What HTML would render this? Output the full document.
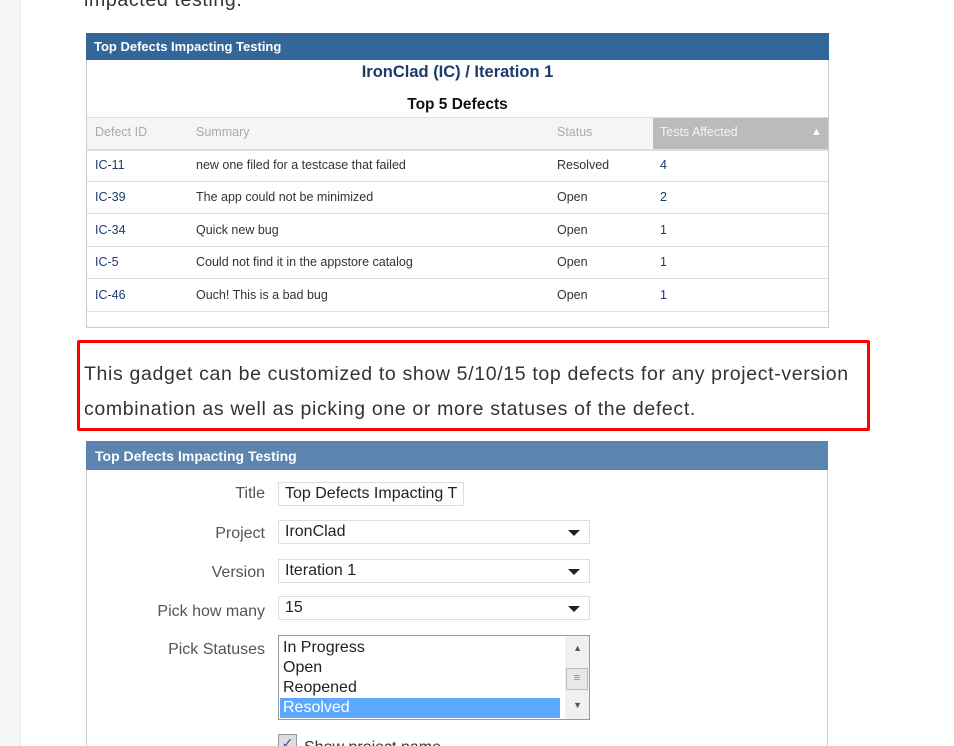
<!DOCTYPE html>
<html style="width:954px;height:746px;overflow:hidden"><head><style>
html,body{margin:0;width:954px;height:746px;overflow:hidden}
body{background:#fff;font-family:"Liberation Sans",sans-serif;position:relative}
.a{position:absolute}
.side{left:0;top:0;width:20px;height:746px;background:#f5f6f6;border-right:1px solid #e6e8e8}
.big{font-size:19.5px;color:#333;white-space:nowrap;letter-spacing:0.65px}
.g1{left:86px;top:33px;width:743px;height:295px;border:1px solid #ccc;border-top:none;box-sizing:border-box}
.hd{left:86px;top:33px;width:743px;height:27px;background:#336699;color:#fff;font-weight:bold;font-size:13px;line-height:27px;padding-left:8px;box-sizing:border-box}
.c{font-size:12.5px;color:#333;white-space:nowrap}
.row{left:87px;width:741px;height:32px;border-bottom:1px solid #ddd}
.lbl{font-size:16px;color:#555;text-align:right;width:180px;left:85px;white-space:nowrap}
.inp{left:278px;height:24px;border:1px solid #ddd;box-sizing:border-box;font-size:16px;color:#222;padding-left:6px;line-height:22px}
.tri{position:absolute;right:9px;top:9px;width:0;height:0;border-left:6px solid transparent;border-right:6px solid transparent;border-top:6px solid #222}
</style></head><body>
<div class="a side"></div>
<div class="a big" style="left:84px;top:-11px">impacted testing.</div>

<div class="a g1"></div>
<div class="a hd">Top Defects Impacting Testing</div>
<div class="a" style="left:86px;width:743px;top:63px;text-align:center;font-weight:bold;font-size:16.5px;color:#1a3b6b">IronClad (IC) / Iteration 1</div>
<div class="a" style="left:86px;width:743px;top:96px;text-align:center;font-weight:bold;font-size:15.5px;color:#111">Top 5 Defects</div>
<div class="a" style="left:87px;top:117px;width:741px;height:31px;background:#f5f5f5;border-top:1px solid #ddd;border-bottom:2px solid #ddd"></div>
<div class="a" style="left:653px;top:118px;width:175px;height:31px;background:#bbb"></div>
<div class="a c" style="left:95px;top:125px;color:#aaa">Defect ID</div>
<div class="a c" style="left:196px;top:125px;color:#aaa">Summary</div>
<div class="a c" style="left:557px;top:125px;color:#aaa">Status</div>
<div class="a c" style="left:660px;top:125px;color:#f4f4f4">Tests Affected</div>
<div class="a" style="left:811px;top:126px;color:#fff;font-size:11px">&#9650;</div>

<div class="a row" style="top:149px"></div>
<div class="a row" style="top:181px;height:32px"></div>
<div class="a row" style="top:214px"></div>
<div class="a row" style="top:246px;height:32px"></div>
<div class="a row" style="top:279px"></div>

<div class="a c" style="left:95px;top:158px;color:#1a3b6b">IC-11</div><div class="a c" style="left:196px;top:158px">new one filed for a testcase that failed</div><div class="a c" style="left:557px;top:158px">Resolved</div><div class="a c" style="left:660px;top:158px;color:#1a3b6b">4</div>
<div class="a c" style="left:95px;top:190px;color:#1a3b6b">IC-39</div><div class="a c" style="left:196px;top:190px">The app could not be minimized</div><div class="a c" style="left:557px;top:190px">Open</div><div class="a c" style="left:660px;top:190px;color:#1a3b6b">2</div>
<div class="a c" style="left:95px;top:223px;color:#1a3b6b">IC-34</div><div class="a c" style="left:196px;top:223px">Quick new bug</div><div class="a c" style="left:557px;top:223px">Open</div><div class="a c" style="left:660px;top:223px;color:#1a3b6b">1</div>
<div class="a c" style="left:95px;top:255px;color:#1a3b6b">IC-5</div><div class="a c" style="left:196px;top:255px">Could not find it in the appstore catalog</div><div class="a c" style="left:557px;top:255px">Open</div><div class="a c" style="left:660px;top:255px;color:#1a3b6b">1</div>
<div class="a c" style="left:95px;top:288px;color:#1a3b6b">IC-46</div><div class="a c" style="left:196px;top:288px">Ouch! This is a bad bug</div><div class="a c" style="left:557px;top:288px">Open</div><div class="a c" style="left:660px;top:288px;color:#1a3b6b">1</div>

<div class="a" style="left:77px;top:340px;width:793px;height:91px;border:3px solid #f00;border-radius:2px;box-sizing:border-box"></div>
<div class="a big" style="left:84px;top:363px">This gadget can be customized to show 5/10/15 top defects for any project-version</div>
<div class="a big" style="left:84px;top:398px">combination as well as picking one or more statuses of the defect.</div>

<div class="a" style="left:86px;top:441px;width:742px;height:305px;border:1px solid #ccc;border-bottom:none;box-sizing:border-box"></div>
<div class="a" style="left:86px;top:441px;width:742px;height:29px;background:#5b84ae;color:#fff;font-weight:bold;font-size:14px;line-height:30px;padding-left:9px;box-sizing:border-box">Top Defects Impacting Testing</div>

<div class="a lbl" style="top:485px">Title</div>
<div class="a inp" style="top:482px;width:186px;overflow:hidden;white-space:nowrap">Top Defects Impacting T</div>
<div class="a lbl" style="top:525px">Project</div>
<div class="a inp" style="top:520px;width:312px">IronClad<span class="tri"></span></div>
<div class="a lbl" style="top:564px">Version</div>
<div class="a inp" style="top:559px;width:312px">Iteration 1<span class="tri"></span></div>
<div class="a lbl" style="top:603px">Pick how many</div>
<div class="a inp" style="top:596px;width:312px">15<span class="tri"></span></div>
<div class="a lbl" style="top:641px">Pick Statuses</div>
<div class="a" style="left:278px;top:635px;width:312px;height:85px;border:1px solid #999;box-sizing:border-box;font-size:16px;color:#222;line-height:20px;padding-top:2px">
 <div style="padding-left:4px">In Progress</div>
 <div style="padding-left:4px">Open</div>
 <div style="padding-left:4px">Reopened</div>
 <div style="margin-left:1px;width:280px;background:#5aa9ff;color:#fff;padding-left:3px;box-sizing:border-box">Resolved</div>
 <div style="position:absolute;right:0;top:0;width:24px;height:83px;background:#f0f0f0"></div>
 <div style="position:absolute;right:7px;top:7px;font-size:9px;color:#555;line-height:10px">&#9650;</div>
 <div style="position:absolute;right:1px;top:32px;width:20px;height:20px;border:1px solid #bbb;background:#e8e8e8;font-size:11px;text-align:center;line-height:18px;color:#888">&#8801;</div>
 <div style="position:absolute;right:7px;top:64px;font-size:9px;color:#555;line-height:10px">&#9660;</div>
</div>
<div class="a" style="left:278px;top:734px;width:17px;height:17px;border:1px solid #999;background:#ddd;color:#2a5a9a;font-size:14px;line-height:16px;text-align:center">&#10003;</div>
<div class="a" style="left:304px;top:739px;font-size:16px;color:#333;white-space:nowrap">Show project name</div>
</body></html>
